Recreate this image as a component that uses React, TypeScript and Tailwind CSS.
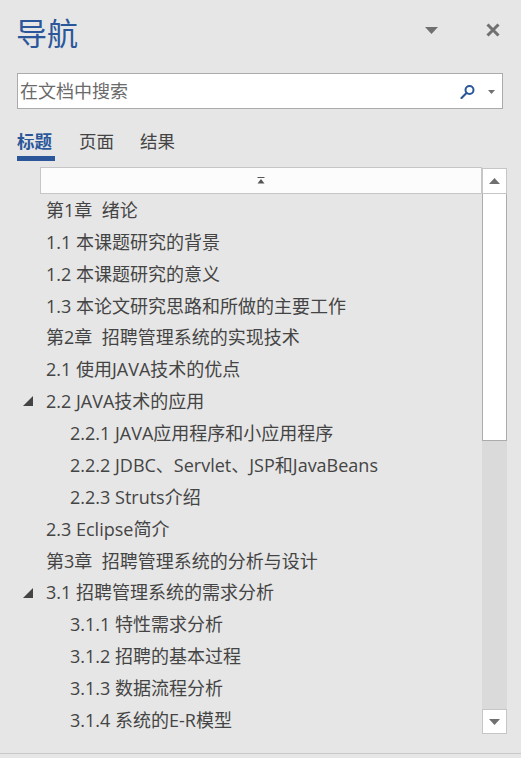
import React from "react";

type Item = { level: 1 | 2; text: string; expanded?: boolean };

const items: Item[] = [
  { level: 1, text: "第1章  绪论" },
  { level: 1, text: "1.1 本课题研究的背景" },
  { level: 1, text: "1.2 本课题研究的意义" },
  { level: 1, text: "1.3 本论文研究思路和所做的主要工作" },
  { level: 1, text: "第2章  招聘管理系统的实现技术" },
  { level: 1, text: "2.1 使用JAVA技术的优点" },
  { level: 1, text: "2.2 JAVA技术的应用", expanded: true },
  { level: 2, text: "2.2.1 JAVA应用程序和小应用程序" },
  { level: 2, text: "2.2.2 JDBC、Servlet、JSP和JavaBeans" },
  { level: 2, text: "2.2.3 Struts介绍" },
  { level: 1, text: "2.3 Eclipse简介" },
  { level: 1, text: "第3章  招聘管理系统的分析与设计" },
  { level: 1, text: "3.1 招聘管理系统的需求分析", expanded: true },
  { level: 2, text: "3.1.1 特性需求分析" },
  { level: 2, text: "3.1.2 招聘的基本过程" },
  { level: 2, text: "3.1.3 数据流程分析" },
  { level: 2, text: "3.1.4 系统的E-R模型" },
];

function Row({ item }: { item: Item }) {
  return (
    <div className="relative flex h-[31.875px] items-center">
      {item.expanded && (
        <svg className="absolute left-[23px] top-[11px]" width="10" height="10" viewBox="0 0 10 10">
          <polygon points="10,0 10,10 0,10" fill="#444444" />
        </svg>
      )}
      <span
        className={
          "whitespace-pre text-[18px] leading-none text-[#444444] " +
          (item.level === 1 ? "pl-[46px]" : "pl-[70px]")
        }
      >
        {item.text}
      </span>
    </div>
  );
}

export default function App() {
  return (
    <div className="relative flex h-[758px] w-[521px] flex-col overflow-hidden bg-[#e6e6e6] font-[family-name:'Open_Sans','Noto_Sans_CJK_SC',sans-serif]">
      {/* Header */}
      <div className="flex h-[66px] items-start">
        <div className="ml-[16px] mt-[13px] text-[31px] leading-[40px] text-[#2b579a]">导航</div>
        <div className="flex-1" />
        <svg className="mt-[27px]" width="13" height="7" viewBox="0 0 13 7">
          <polygon points="0,0 13,0 6.5,7" fill="#707070" />
        </svg>
        <svg className="ml-[48px] mr-[21px] mt-[23px]" width="14" height="14" viewBox="0 0 14 14">
          <path d="M1.5 1.5 L12.5 12.5 M12.5 1.5 L1.5 12.5" stroke="#707070" strokeWidth="3" />
        </svg>
      </div>

      {/* Search box */}
      <div className="ml-[17px] mt-[7px] flex h-[36px] w-[486px] items-center border border-[#ababab] bg-white">
        <span className="pl-[2px] text-[18px] leading-none text-[#6a6a6a]">在文档中搜索</span>
        <div className="flex-1" />
        <svg width="15" height="14" viewBox="0 0 15 14" className="mr-[13px] mt-[1px]">
          <circle cx="9.5" cy="5" r="4" fill="none" stroke="#2b579a" strokeWidth="2" />
          <path d="M6.5 8 L1.5 13" stroke="#2b579a" strokeWidth="2.2" strokeLinecap="round" />
        </svg>
        <svg width="7" height="4" viewBox="0 0 7 4" className="mr-[7px] mt-[2px]">
          <polygon points="0,0 7,0 3.5,4" fill="#707070" />
        </svg>
      </div>

      {/* Tabs */}
      <div className="ml-[17px] mt-[20px] flex h-[38px] items-start">
        <div className="flex w-[62px] flex-col">
          <span className="h-[24px] text-[17.5px] font-bold leading-[24px] text-[#2b579a]">标题</span>
          <div className="mt-[3px] h-[5px] w-[38px] bg-[#2b579a]" />
        </div>
        <div className="w-[61px]">
          <span className="text-[17.5px] leading-[24px] text-[#444444]">页面</span>
        </div>
        <div>
          <span className="text-[17.5px] leading-[24px] text-[#444444]">结果</span>
        </div>
      </div>

      {/* Tree */}
      <div className="flex h-[586px]">
        <div className="flex w-[482px] flex-col">
          <div className="ml-[40px] flex h-[27px] items-center justify-center border border-[#c6c6c6] bg-[#fcfcfc]">
            <svg width="8" height="7" viewBox="0 0 8 7">
              <rect x="0.5" y="0" width="7" height="1" fill="#555555" />
              <polygon points="4,2 7.5,6.5 0.5,6.5" fill="#555555" />
            </svg>
          </div>
          {items.map((it, i) => (
            <Row key={i} item={it} />
          ))}
        </div>
        <div className="flex w-[25px] flex-col pt-[1px]">
          <div className="flex h-[26px] items-center justify-center border border-[#c6c6c6] bg-white">
            <svg width="11" height="6" viewBox="0 0 11 6">
              <polygon points="5.5,0 11,6 0,6" fill="#707070" />
            </svg>
          </div>
          <div className="h-[247px] border border-t-0 border-[#acacac] bg-white" />
          <div className="h-[268px] bg-[#dadada]" />
          <div className="flex h-[25px] items-center justify-center border border-[#c6c6c6] bg-white">
            <svg width="11" height="6" viewBox="0 0 11 6">
              <polygon points="0,0 11,0 5.5,6" fill="#707070" />
            </svg>
          </div>
        </div>
      </div>
      <div className="h-px w-full bg-[#c8c8c8]" />
    </div>
  );
}
